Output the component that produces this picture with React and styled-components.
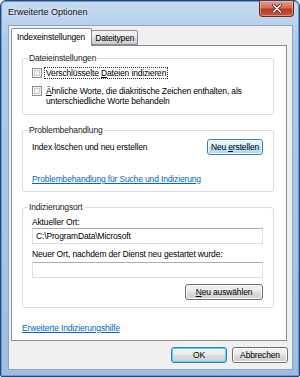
import styled, { createGlobalStyle } from "styled-components";

const GlobalStyle = createGlobalStyle`
    html, body {
        margin: 0;
        padding: 0;
        background: #ffffff;
    }
    body {
        font-family: "Liberation Sans", Arial, sans-serif;
        font-size: 8.5px;
        color: #000;
    }
`;

const Window = styled.div`
    width: 300px;
    height: 377px;
    box-sizing: border-box;
    border: 1px solid #28466f;
    border-radius: 6px 6px 2px 2px;
    background: linear-gradient(180deg, #c6dbf2 0%, #b0cbea 10%, #a8c4e6 60%, #9fbde2 100%);
    box-shadow: inset 0 0 0 1px #6f9ad0;
    display: flex;
    flex-direction: column;
    padding: 0 6px 6px 7px;
`;

const TitleBar = styled.div`
    height: 24px;
    display: flex;
    justify-content: space-between;
    align-items: flex-start;
`;

const Title = styled.div`
    font-size: 9px;
    margin-top: 6px;
    color: #111;
    text-shadow: 0 0 4px rgba(255, 255, 255, 0.9);
`;

const CloseButton = styled.div`
    width: 35px;
    height: 16px;
    margin-right: -1px;
    box-sizing: border-box;
    border: 1px solid #6b2a20;
    border-top: none;
    border-radius: 0 0 4px 4px;
    background: linear-gradient(180deg, #e2a08f 0%, #d16d56 45%, #b73a22 55%, #c9553b 100%);
    box-shadow: inset 0 0 0 1px rgba(255, 200, 180, 0.5);
    display: flex;
    align-items: center;
    justify-content: center;
`;

const Client = styled.div`
    flex: 1;
    box-sizing: border-box;
    background: #f0f0f0;
    border: 1px solid #8fa4c0;
    display: flex;
    flex-direction: column;
    padding-top: 2px;
`;

const TabStrip = styled.div`
    display: flex;
    align-items: flex-end;
    padding-left: 2px;
    position: relative;
    z-index: 1;
`;

const Tab = styled.div`
    box-sizing: border-box;
    height: ${(p) => (p.$active ? "18px" : "15px")};
    padding: ${(p) => (p.$active ? "3px 6px 0 5px" : "2px 3px 0 3px")};
    border: 1px solid #898c95;
    border-bottom: ${(p) => (p.$active ? "none" : "1px solid #898c95")};
    border-radius: 2px 2px 0 0;
    margin-left: ${(p) => (p.$active ? "0" : "-1px")};
    margin-bottom: ${(p) => (p.$active ? "-1px" : "0")};
    background: ${(p) =>
        p.$active ? "#ffffff" : "linear-gradient(180deg, #f3f3f3 0%, #ebebeb 50%, #dddddd 51%, #cfcfcf 100%)"};
    letter-spacing: -0.15px;
    white-space: nowrap;
`;

const Panel = styled.div`
    flex: 1;
    margin: 0 5px 0 2px;
    background: #ffffff;
    border: 1px solid #898c95;
    padding: 7px 12px 0 10px;
    display: flex;
    flex-direction: column;
`;

const Group = styled.fieldset`
    margin: 0;
    border: 1px solid #d5dfe5;
    border-radius: 3px;
    padding: ${(p) => p.$pad || "5px 10px 7px 9px"};
    display: flex;
    flex-direction: column;
    & + & {
        margin-top: 10px;
    }
`;

const Legend = styled.legend`
    padding: 0 1px;
    margin-left: -4px;
    line-height: 10px;
    letter-spacing: -0.15px;
    color: #1b1b1b;
`;

const Label = styled.div`
    line-height: 10px;
    letter-spacing: -0.15px;
    margin-top: ${(p) => p.$mt || "0"};
`;

const CheckRow = styled.div`
    display: flex;
    align-items: flex-start;
    margin-top: ${(p) => p.$mt || "0"};
`;

const CheckBox = styled.div`
    width: 10px;
    height: 10px;
    box-sizing: border-box;
    border: 1px solid #8e8f8f;
    background: #f4f4f4;
    box-shadow: inset 0 0 0 1px #f4f4f4, inset 0 0 0 2px #c9cbce;
    flex-shrink: 0;
    margin-right: 2px;
`;

const CheckText = styled.div`
    line-height: 10px;
    letter-spacing: -0.15px;
    padding: 0 1px;
    border: 1px dotted ${(p) => (p.$focus ? "#333" : "transparent")};
    margin-top: -1px;
`;

const U = styled.span`
    text-decoration: underline;
`;

const ActionRow = styled.div`
    display: flex;
    align-items: center;
    justify-content: space-between;
`;

const Button = styled.div`
    box-sizing: border-box;
    width: ${(p) => p.$w || "56px"};
    height: 16px;
    display: flex;
    align-items: center;
    justify-content: center;
    border: 1px solid ${(p) => (p.$blue ? "#3c7fb1" : "#707070")};
    border-radius: 3px;
    background: ${(p) =>
        p.$hover
            ? "linear-gradient(180deg, #eaf6fd 0%, #d9f0fc 45%, #bee6fd 50%, #a7d9f5 100%)"
            : "linear-gradient(180deg, #f2f2f2 0%, #ebebeb 45%, #dddddd 50%, #cfcfcf 100%)"};
    box-shadow: ${(p) => (p.$default ? "inset 0 0 0 1px #48d8fb" : "inset 0 0 0 1px #fcfcfc")};
    letter-spacing: -0.15px;
    white-space: pre;
    align-self: ${(p) => p.$align || "auto"};
    margin-top: ${(p) => p.$mt || "0"};
`;

const Link = styled.a`
    color: #0066cc;
    text-decoration: underline;
    line-height: 10px;
    letter-spacing: -0.15px;
    margin-top: ${(p) => p.$mt || "0"};
    align-self: flex-start;
`;

const TextBox = styled.div`
    box-sizing: border-box;
    height: 16px;
    border: 1px solid #dbdfe6;
    border-top-color: #abadb3;
    background: #fff;
    padding: 0 3px;
    display: flex;
    align-items: center;
    letter-spacing: -0.15px;
    margin-top: ${(p) => p.$mt || "0"};
`;

const ButtonRow = styled.div`
    display: flex;
    justify-content: flex-end;
    gap: 5px;
    padding: 6px 4px 6px 0;
`;

const App = () => {
    return (
        <>
            <GlobalStyle />
            <Window>
                <TitleBar>
                    <Title>Erweiterte Optionen</Title>
                    <CloseButton>
                        <svg width="10" height="9" viewBox="0 0 10 9">
                            <path d="M1.5 1 L8.5 8 M8.5 1 L1.5 8" stroke="#5a1a10" strokeWidth="3" strokeLinecap="round" />
                            <path d="M1.5 1 L8.5 8 M8.5 1 L1.5 8" stroke="#ffffff" strokeWidth="1.6" strokeLinecap="round" />
                        </svg>
                    </CloseButton>
                </TitleBar>
                <Client>
                    <TabStrip>
                        <Tab $active>Indexeinstellungen</Tab>
                        <Tab>Dateitypen</Tab>
                    </TabStrip>
                    <Panel>
                        <Group>
                            <Legend>Dateieinstellungen</Legend>
                            <CheckRow>
                                <CheckBox />
                                <CheckText $focus>
                                    Verschlüsselte <U>D</U>ateien indizieren
                                </CheckText>
                            </CheckRow>
                            <CheckRow $mt="7px">
                                <CheckBox />
                                <CheckText>
                                    <U>Ä</U>hnliche Worte, die diakritische Zeichen enthalten, als
                                    <br />
                                    unterschiedliche Worte behandeln
                                </CheckText>
                            </CheckRow>
                        </Group>
                        <Group $pad="4px 10px 7px 9px">
                            <Legend>Problembehandlung</Legend>
                            <ActionRow>
                                <Label>Index löschen und neu erstellen</Label>
                                <Button $blue $hover>
                                    <span>
                                        Neu <U>e</U>rstellen
                                    </span>
                                </Button>
                            </ActionRow>
                            <Link $mt="19px">Problembehandlung für Suche und Indizierung</Link>
                        </Group>
                        <Group>
                            <Legend>Indizierungsort</Legend>
                            <Label>Aktueller Ort:</Label>
                            <TextBox $mt="1px">C:\ProgramData\Microsoft</TextBox>
                            <Label $mt="5px">Neuer Ort, nachdem der Dienst neu gestartet wurde:</Label>
                            <TextBox $mt="3px" />
                            <Button $w="78px" $align="flex-end" $mt="6px">
                                <span>
                                    <U>N</U>eu auswählen
                                </span>
                            </Button>
                        </Group>
                        <Link $mt="15px">Erweiterte Indizierungshilfe</Link>
                    </Panel>
                    <ButtonRow>
                        <Button $blue $default>OK</Button>
                        <Button>Abbrechen</Button>
                    </ButtonRow>
                </Client>
            </Window>
        </>
    );
};

export default App;
